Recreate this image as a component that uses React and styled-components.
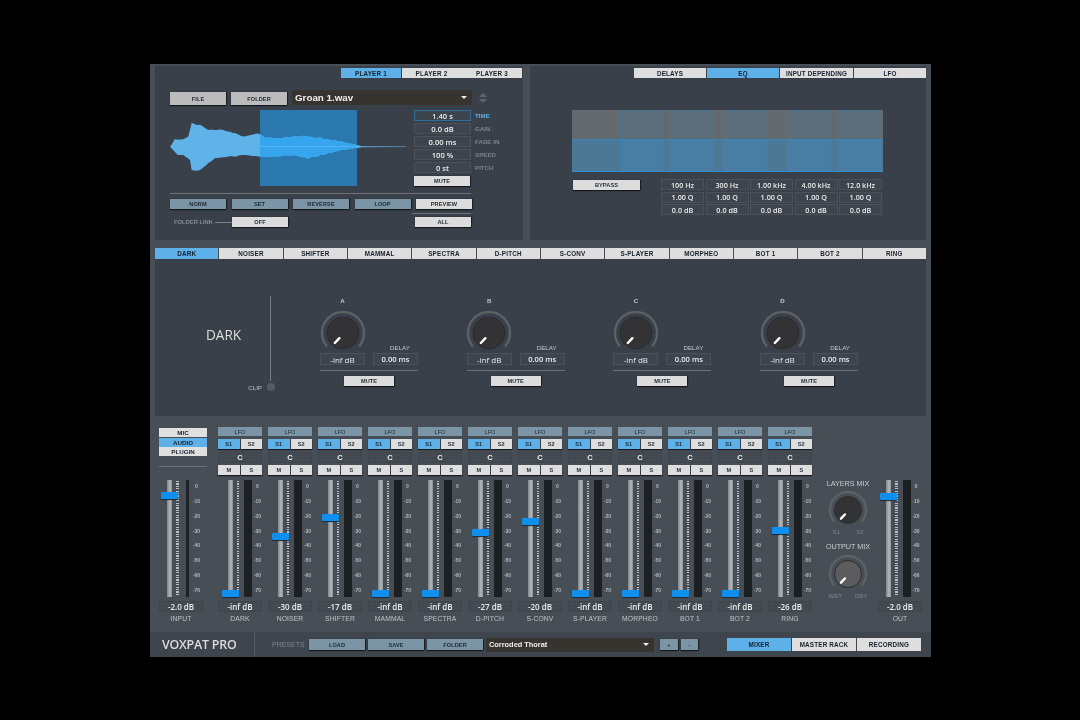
import React from "react";
import styled, { createGlobalStyle } from "styled-components";

const Global = createGlobalStyle`
  html, body { margin: 0; padding: 0; background: #000; }
  #root { padding: 64px 0 0 150px; width: 1080px; height: 720px; box-sizing: border-box; overflow: hidden; background: #000; }
  * { box-sizing: border-box; }
`;

const Shell = styled.div`
  width: 781px; height: 593px; background: #474e56; display: flex; flex-direction: column;
  font-family: "Liberation Sans", Arial, sans-serif; filter: blur(0.45px); color: #e6e6e6;
`;
const TopRow = styled.div`display: flex; gap: 7px; padding: 2px 5px 0; height: 184px; flex: none;`;
const Panel = styled.section`
  width: ${p => p.$w}px; height: 174px; background: #3a4049; display: flex; flex-direction: column;
`;
const TabStrip = styled.div`
  display: flex; justify-content: ${p => p.$end ? "flex-end" : "flex-start"}; height: ${p => p.$h || 10}px;
  margin: ${p => p.$m || "0"}; flex: none; gap: ${p => p.$gap ?? 1}px;
`;
const Tab = styled.div`
  width: ${p => p.$w ? p.$w + "px" : "auto"}; flex: ${p => p.$w ? "none" : 1}; height: 100%;
  background: ${p => p.$on ? "#5eb0e8" : "#dedede"}; color: #15202a;
  font: bold 6.3px "Liberation Sans", Arial, sans-serif; letter-spacing: .2px;
  display: flex; align-items: center; justify-content: center; white-space: nowrap;
`;
const Btn = styled.div`
  width: ${p => p.$w}px; height: ${p => p.$h || 10}px; flex: none; margin: ${p => p.$m || 0};
  background: ${p => p.$tone === "steel" ? "#7b94a6" : p.$tone === "grey" ? "#bcbcbc" : "#dcdcdc"};
  box-shadow: 0 1px 1px #14181c, 1px 0 1px #1d2126;
  color: #1d2a34; font: bold 5.6px "Liberation Sans", Arial, sans-serif;
  display: flex; align-items: center; justify-content: center; letter-spacing: .1px;
`;
const FileRow = styled.div`display: flex; align-items: flex-end; gap: 5px; margin: 12px 0 0 15px; height: 15px;`;
const Select = styled.div`
  width: ${p => p.$w}px; height: ${p => p.$h}px; background: #37332f; color: #f0f0f0; flex: none;
  font: bold ${p => p.$fs}px "Liberation Sans", Arial, sans-serif; display: flex; align-items: center;
  justify-content: space-between; padding: 0 5px 0 3px;
`;
const Caret = styled.i`
  width: 0; height: 0; border-left: 3px solid transparent; border-right: 3px solid transparent;
  border-top: 3.5px solid #f2f2f2; display: block;
`;
const Stepper = styled.div`display: flex; flex-direction: column; gap: 2px; align-self: center; margin-left: 2px;`;
const StepArrow = styled.i`
  width: 0; height: 0; display: block; border-left: 4px solid transparent; border-right: 4px solid transparent;
  ${p => p.$up ? "border-bottom: 4px solid #5d656d;" : "border-top: 4px solid #5d656d;"}
`;
const WaveRow = styled.div`display: flex; margin: 5px 0 0 15px; gap: 8px; height: 76px;`;
const Params = styled.div`display: grid; grid-template-columns: 57px auto; grid-auto-rows: 11px; row-gap: 2px; column-gap: 4px; align-items: center;`;
const ValueBox = styled.div`
  width: ${p => p.$w ? p.$w + "px" : "100%"}; height: ${p => p.$h || 11}px; flex: none; position: relative;
  border: 1px solid ${p => p.$on ? "#2f6f9c" : p.$ghost ? "#3f454d" : "#4b5159"}; background: ${p => p.$ghost ? "#434a52" : "#3e444d"}; color: #ececec;
  font: ${p => p.$fw || 600} ${p => p.$fs || 7.6}px "Open Sans", "Liberation Sans", sans-serif;
  display: flex; align-items: center; justify-content: center; white-space: nowrap;
`;
const ParamLabel = styled.span`
  font: bold 6.2px "Liberation Sans", Arial, sans-serif; color: ${p => p.$on ? "#5eb0e8" : "#7b8289"};
`;
const Rule = styled.div`height: 1px; background: #6d7479; width: ${p => p.$w}px; margin: ${p => p.$m || 0}; flex: none;`;
const BtnRow = styled.div`display: flex; gap: 5.5px; margin: 5px 0 0 15px;`;
const BottomRow = styled.div`display: flex; margin: 4px 0 0 15px; align-items: flex-end; justify-content: space-between; width: 301px;`;
const FolderLink = styled.div`display: flex; align-items: center;`;
const LinkLabel = styled.span`font: bold 5.8px "Liberation Sans", Arial, sans-serif; color: #858c92; margin-left: 4px; width: 41px; white-space: nowrap;`;
const LinkWire = styled.i`width: 17px; height: 1px; background: #7d848b; display: block;`;
const AllCol = styled.div`display: flex; flex-direction: column; align-items: flex-end; gap: 3px;`;

const EqWrap = styled.div`margin: 32px 0 0 42px; width: 311px; height: 62px; flex: none;`;
const EqBottom = styled.div`display: flex; margin: 7px 0 0 43px; align-items: flex-start;`;
const EqTable = styled.div`display: grid; grid-template-columns: repeat(5, 43px); column-gap: 1.5px; row-gap: 1.5px; margin-left: 21px; grid-auto-rows: 11px;`;

const FxTabs = styled.div`display: flex; margin: 0 5px; height: 11px; flex: none; gap: 1px;`;
const FxPanel = styled.section`
  margin: 0 5px; height: 157px; flex: none; background: #3a4049; display: flex; align-items: flex-start; padding-top: 37px;
`;
const Head = styled.div`width: 116px; height: 85px; border-right: 1px solid #767c82; flex: none; position: relative; display: flex; align-items: center; padding: 0 0 8px 51px;`;
const FxTitle = styled.div`font: 500 13.6px "Open Sans", "Liberation Sans", sans-serif; color: #dedede;`;
const ClipTag = styled.div`
  position: absolute; right: -5px; top: 87px; display: flex; align-items: center; gap: 5px;
  font: 6.2px "Liberation Sans", Arial, sans-serif; color: #bcc0c4;
`;
const Led = styled.i`width: 8px; height: 8px; border-radius: 50%; background: #565b60; display: block;`;
const Groups = styled.div`display: flex; gap: 48.7px; margin-left: 49px;`;
const Group = styled.div`width: 98px; display: flex; flex-direction: column; align-items: center;`;
const GroupTop = styled.div`display: flex; width: 98px; justify-content: space-between; align-items: flex-end; height: 69px;`;
const GroupCol = styled.div`display: flex; flex-direction: column; align-items: center; width: 45px;`;
const TinyLabel = styled.div`
  font: ${p => p.$fw || 400} ${p => p.$fs || 6.2}px "Liberation Sans", Arial, sans-serif; color: ${p => p.$c || "#c4c8cc"};
  margin: ${p => p.$m || 0}; line-height: ${p => p.$lh || 8}px; white-space: nowrap; letter-spacing: ${p => p.$ls || 0}px;
`;
const KnobSvg = styled.svg`display: block; margin: ${p => p.$m || 0}; flex: none;`;

const Mixer = styled.section`display: flex; height: 216px; flex: none; padding: 11px 0 0 9px; background: #474e56;`;
const InputCol = styled.div`width: 48px; margin-right: 11px; flex: none;`;
const ChannelCol = styled.div`width: 44px; margin-right: 6px; flex: none;`;
const TopBlock = styled.div`height: 48px; display: flex; flex-direction: column;`;
const Sources = styled.div`display: flex; flex-direction: column; gap: .5px; margin-top: 1px;`;
const SourceBtn = styled.div`
  height: 9px; width: 48px; background: ${p => p.$on ? "#5eb0e8" : "#e0e0e0"}; color: #15202a;
  font: bold 6.2px "Liberation Sans", Arial, sans-serif; display: flex; align-items: center; justify-content: center;
`;
const Pair = styled.div`display: flex; gap: 1px; height: 10px; margin-top: ${p => p.$mt || 0}px;`;
const Small = styled.div`
  flex: 1; background: ${p => p.$on ? "#5eb0e8" : "#dedede"}; color: #1d2a34; box-shadow: 0 1px 1px #181c20;
  font: bold 5.6px "Liberation Sans", Arial, sans-serif; display: flex; align-items: center; justify-content: center;
`;
const LfoBtn = styled.div`
  height: 9px; background: #7b94a6; color: #1d2a34; font: 5.6px "Liberation Sans", Arial, sans-serif;
  display: flex; align-items: center; justify-content: center;
`;
const CenterBox = styled.div`
  height: 11px; margin-top: 3px; background: #434a52; border: 1px solid #3f454d; color: #eee;
  font: bold 7.6px "Liberation Sans", Arial, sans-serif; display: flex; align-items: center; justify-content: center;
`;
const Strip = styled.div`height: 117px; margin-top: 5px; display: flex; padding-left: ${p => p.$pad}px; position: relative;`;
const Track = styled.div`
  width: 5px; height: 117px; position: relative; flex: none;
  background: linear-gradient(90deg, #80868a, #b4b8ba 60%, #8a9094);
`;
const Thumb = styled.div`
  position: absolute; left: -6px; width: 17px; height: 7px; top: ${p => p.$top}px; background: #0f8fee;
  box-shadow: 0 1px 1px #1a2a38; border-radius: 1px;
`;
const Dots = styled.div`
  width: 2.5px; height: 115px; flex: none; margin: 1px 0 0 ${p => p.$ml}px;
  background: repeating-linear-gradient(180deg, #bcc1c5 0, #bcc1c5 1.2px, transparent 1.2px, transparent 2.4px);
`;
const Meter = styled.div`
  width: ${p => p.$w}px; height: 117px; flex: none; margin-left: ${p => p.$ml}px; background: #202326;
  ${p => p.$split ? "background: linear-gradient(90deg, #1d2023 45%, #33383d 45%, #33383d 55%, #1d2023 55%);" : ""}
`;
const Scale = styled.div`
  height: 109px; margin: 4px 0 0 ${p => p.$ml}px; display: flex; flex-direction: column; justify-content: space-between;
  font: bold 5px "Liberation Sans", Arial, sans-serif; color: #b4b9bd; width: 10px; flex: none;
`;
const ScaleTick = styled.span`display: block; line-height: 5px; height: 5px; text-align: center;`;
const ValueGap = styled.div`margin-top: 4px;`;
const ChanLabel = styled.div`
  font: 6.8px "Liberation Sans", Arial, sans-serif; color: #bfc4c8; text-align: center; margin-top: 3px; line-height: 8px; letter-spacing: .1px;
  width: 44px;
`;
const MixCol = styled.div`width: 60px; padding-top: 53px; flex: none; display: flex; flex-direction: column; align-items: center;`;
const KnobLegend = styled.div`
  display: flex; justify-content: space-between; width: ${p => p.$w}px; height: 6px; margin-top: -1px;
  font: 6px "Liberation Sans", Arial, sans-serif; color: #7f868c; line-height: 6px;
`;

const Footer = styled.footer`display: flex; align-items: center; height: 25px; flex: none; background: #3e454d;`;
const Brand = styled.div`
  width: 105px; height: 100%; border-right: 1px solid #565c63; padding-left: 12px; flex: none; display: flex; align-items: center;
  font: 600 12.4px "Open Sans", "Liberation Sans", sans-serif; color: #dcdcdc; letter-spacing: -.2px;
`;
const PresetLabel = styled.span`font: 7px "Liberation Sans", Arial, sans-serif; color: #81888e; margin: 0 6px 0 17px; width: 31px;`;
const FootGroup = styled.div`display: flex; align-items: center; gap: 3px;`;
const ModeTabs = styled.div`display: flex; gap: 1px; margin-left: 29px; height: 13px;`;

/* ---------- data ---------- */
const top = [[15,140],[30,118],[55,118],[70,110],[80,70],[105,75],[130,90],[165,88],[190,95],[210,100],[235,110],[280,100],[300,112],[340,115],[380,110],[420,108],[470,115],[530,125],[590,138]];
const bot = [[590,142],[530,150],[470,165],[430,175],[380,165],[330,170],[285,170],[240,165],[190,170],[150,175],[130,190],[105,210],[80,212],[75,180],[55,165],[30,165]];
function wavePath() {
  const pts = [];
  const add = (arr, sign) => {
    for (let i = 0; i < arr.length - 1; i++) {
      const [x0, y0] = arr[i], [x1, y1] = arr[i + 1];
      const n = Math.max(1, Math.round(Math.abs(x1 - x0) / 8));
      for (let k = 0; k < n; k++) {
        const t = k / n, x = x0 + (x1 - x0) * t;
        const jit = Math.sin(x * 1.37 + sign) * 0.9 + Math.sin(x * 0.53) * 1.1;
        const scale = x > 540 ? 0.2 : 1;
        pts.push([x / 3 - 5, (y0 + (y1 - y0) * t + jit * scale) / 3 - 10]);
      }
    }
  };
  add(top, 1);
  pts.push([191.7, 36.2], [236, 36.4], [236, 37], [191.7, 37.2]);
  add(bot, 2);
  pts.push([0, 36.7]);
  return "M" + pts.map(p => p[0].toFixed(1) + " " + p[1].toFixed(1)).join("L") + "Z";
}
const WAVE = wavePath();

function Wave() {
  return (
    <svg width="236" height="76" viewBox="0 0 236 76" style={{ display: "block", flex: "none" }}>
      <defs>
        <clipPath id="sel"><rect x="90" y="0" width="97" height="76" /></clipPath>
      </defs>
      <rect x="90" y="0" width="97" height="76" fill="#2a78ad" />
      <path d={WAVE} fill="#5fb3e8" />
      <path d={WAVE} fill="#35a6ee" clipPath="url(#sel)" />
      <rect x="90" y="36" width="97" height="1" fill="#6cc0f2" opacity=".6" />
    </svg>
  );
}

const bands = [[48, 44], [97, 45], [151, 45], [215, 45], [265, 45]];
function EqDisplay() {
  return (
    <svg width="311" height="62" viewBox="0 0 311 62" style={{ display: "block" }}>
      <rect width="311" height="30" fill="#626a70" />
      <rect y="30" width="311" height="32" fill="#4c7795" />
      {bands.map(([x, w]) => (
        <g key={x}>
          <rect x={x} width={w} height="30" fill="#5c6d7a" />
          <rect x={x} y="30" width={w} height="32" fill="#4a7da4" />
          <rect x={x + .5} y=".5" width={w - 1} height="61" fill="none" stroke="#2f82bb" strokeOpacity=".35" />
        </g>
      ))}
      <line x1="0" x2="311" y1="30" y2="30" stroke="#2f8fd0" />
      <line x1="0" x2="311" y1="61.5" y2="61.5" stroke="#2f8fd0" />
    </svg>
  );
}

function Knob({ r = 22, inner = 16, fill = "#333336", m }) {
  const s = r * 2 + 2, c = s / 2, ro = r - 1;
  const a = (d) => [c + ro * Math.sin(d * Math.PI / 180), c - ro * Math.cos(d * Math.PI / 180)];
  const [x0, y0] = a(-130), [x1, y1] = a(130);
  const k = r / 22;
  return (
    <KnobSvg $m={m} width={s} height={s} viewBox={`0 0 ${s} ${s}`}>
      <path d={`M${x0} ${y0}A${ro} ${ro} 0 1 1 ${x1} ${y1}`} fill="none" stroke="#5c6166" strokeWidth="2.4" />
      <circle cx={c} cy={c} r={inner} fill={fill} stroke="#2b2c2f" strokeWidth="1" />
      <line x1={c - 8.2 * k} y1={c + 10 * k} x2={c - 3.6 * k} y2={c + 5.2 * k} stroke="#fff" strokeWidth="2.4" strokeLinecap="round" />
    </KnobSvg>
  );
}

const ticks = ["0", "-10", "-20", "-30", "-40", "-50", "-60", "-70"];
function FaderStrip({ y, pad, dotMl, meterW, meterMl, scaleMl, split }) {
  return (
    <Strip $pad={pad}>
      <Track><Thumb $top={y - 3.5 - 480} /></Track>
      <Dots $ml={dotMl} />
      <Meter $w={meterW} $ml={meterMl} $split={split} />
      <Scale $ml={scaleMl}>{ticks.map(t => <ScaleTick key={t}>{t}</ScaleTick>)}</Scale>
    </Strip>
  );
}
const chanStrip = { pad: 9.5, dotMl: 4, meterW: 8, meterMl: 5, scaleMl: 0.5, split: true };

const channels = [
  ["DARK", "-inf dB", 593], ["NOISER", "-30 dB", 536], ["SHIFTER", "-17 dB", 517], ["MAMMAL", "-inf dB", 593],
  ["SPECTRA", "-inf dB", 593], ["D-PITCH", "-27 dB", 532], ["S-CONV", "-20 dB", 521], ["S-PLAYER", "-inf dB", 593],
  ["MORPHEO", "-inf dB", 593], ["BOT 1", "-inf dB", 593], ["BOT 2", "-inf dB", 593], ["RING", "-26 dB", 530],
];
const fxTabs = ["DARK", "NOISER", "SHIFTER", "MAMMAL", "SPECTRA", "D-PITCH", "S-CONV", "S-PLAYER", "MORPHEO", "BOT 1", "BOT 2", "RING"];
const eqRows = [
  ["100 Hz", "300 Hz", "1.00 kHz", "4.00 kHz", "12.0 kHz"],
  ["1.00 Q", "1.00 Q", "1.00 Q", "1.00 Q", "1.00 Q"],
  ["0.0 dB", "0.0 dB", "0.0 dB", "0.0 dB", "0.0 dB"],
];
const params = [["1.40 s", "TIME", true], ["0.0 dB", "GAIN"], ["0.00 ms", "FADE IN"], ["100 %", "SPEED"], ["0 st", "PITCH"]];

export default function App() {
  return (
    <Shell>
      <Global />
      <TopRow>
        <Panel $w={368}>
          <TabStrip $end $m="2px 1px 0 0" $gap={0.5}>
            <Tab $w={60} $on>PLAYER 1</Tab><Tab $w={60}>PLAYER 2</Tab><Tab $w={60}>PLAYER 3</Tab>
          </TabStrip>
          <FileRow>
            <Btn $w={56} $h={13} $tone="grey">FILE</Btn>
            <Btn $w={56} $h={13} $tone="grey">FOLDER</Btn>
            <Select $w={180} $h={15} $fs={9.8}>Groan 1.wav<Caret /></Select>
            <Stepper><StepArrow $up /><StepArrow /></Stepper>
          </FileRow>
          <WaveRow>
            <Wave />
            <Params>
              {params.map(([v, l, on]) => (
                <React.Fragment key={l}>
                  <ValueBox $on={on}>{v}</ValueBox>
                  <ParamLabel $on={on}>{l}</ParamLabel>
                </React.Fragment>
              ))}
              <Btn $w={56}>MUTE</Btn>
            </Params>
          </WaveRow>
          <Rule $w={301} $m="7px 0 0 15px" />
          <BtnRow>
            <Btn $w={56} $tone="steel">NORM</Btn>
            <Btn $w={56} $tone="steel">SET</Btn>
            <Btn $w={56} $tone="steel">REVERSE</Btn>
            <Btn $w={56} $tone="steel">LOOP</Btn>
            <Btn $w={56}>PREVIEW</Btn>
          </BtnRow>
          <BottomRow>
            <FolderLink>
              <LinkLabel>FOLDER LINK</LinkLabel><LinkWire />
              <Btn $w={56}>OFF</Btn>
            </FolderLink>
            <AllCol>
              <Rule $w={59} />
              <Btn $w={56}>ALL</Btn>
            </AllCol>
          </BottomRow>
        </Panel>
        <Panel $w={396}>
          <TabStrip $end $m="2px 0 0 0" $gap={1}>
            <Tab $w={72}>DELAYS</Tab><Tab $w={72} $on>EQ</Tab><Tab $w={73}>INPUT DEPENDING</Tab><Tab $w={72}>LFO</Tab>
          </TabStrip>
          <EqWrap><EqDisplay /></EqWrap>
          <EqBottom>
            <Btn $w={67} $m="1px 0 0 0">BYPASS</Btn>
            <EqTable>
              {eqRows.flat().map((v, i) => <ValueBox key={i} $fs={7.2}>{v}</ValueBox>)}
            </EqTable>
          </EqBottom>
        </Panel>
      </TopRow>
      <FxTabs>
        {fxTabs.map((t, i) => <Tab key={t} $on={i === 0}>{t}</Tab>)}
      </FxTabs>
      <FxPanel>
        <Head>
          <FxTitle>DARK</FxTitle>
          <ClipTag>CLIP<Led /></ClipTag>
        </Head>
        <Groups>
          {["A", "B", "C", "D"].map(l => (
            <Group key={l}>
              <GroupTop>
                <GroupCol>
                  <TinyLabel $fw="bold" $m="0 0 5px">{l}</TinyLabel>
                  <Knob m="0 0 -3px" />
                  <ValueBox $w={45} $h={12} $fw={500} $fs={8}>-inf dB</ValueBox>
                </GroupCol>
                <GroupCol>
                  <TinyLabel $m="0 0 1px 9px">DELAY</TinyLabel>
                  <ValueBox $w={45} $h={12}>0.00 ms</ValueBox>
                </GroupCol>
              </GroupTop>
              <Rule $w={98} $m="5px 0 5px" />
              <Btn $w={50} $h={9.5}>MUTE</Btn>
            </Group>
          ))}
        </Groups>
      </FxPanel>
      <Mixer>
        <InputCol>
          <TopBlock>
            <Sources>
              <SourceBtn>MIC</SourceBtn><SourceBtn $on>AUDIO</SourceBtn><SourceBtn>PLUGIN</SourceBtn>
            </Sources>
            <Rule $w={48} $m="10px 0 0" />
          </TopBlock>
          <FaderStrip y={495} pad={8} dotMl={4} meterW={3} meterMl={7.5} scaleMl={2.5} />
          <ValueGap><ValueBox $ghost $w={44} $fs={8}>-2.0 dB</ValueBox></ValueGap>
          <ChanLabel>INPUT</ChanLabel>
        </InputCol>
        {channels.map(([name, val, y]) => (
          <ChannelCol key={name}>
            <TopBlock>
              <LfoBtn>LFO</LfoBtn>
              <Pair $mt={3}><Small $on>S1</Small><Small>S2</Small></Pair>
              <CenterBox>C</CenterBox>
              <Pair $mt={2}><Small>M</Small><Small>S</Small></Pair>
            </TopBlock>
            <FaderStrip y={y} {...chanStrip} />
            <ValueGap><ValueBox $ghost $fs={8}>{val}</ValueBox></ValueGap>
            <ChanLabel>{name}</ChanLabel>
          </ChannelCol>
        ))}
        <MixCol>
          <TinyLabel $fs={7.2} $c="#c8ccd0">LAYERS MIX</TinyLabel>
          <Knob r={19} inner={13.5} m="2px 0 0" />
          <KnobLegend $w={31}><span>S1</span><span>S2</span></KnobLegend>
          <TinyLabel $fs={7.2} $c="#c8ccd0" $m="8px 0 0">OUTPUT MIX</TinyLabel>
          <Knob r={19} inner={13.5} fill="#5c5b5d" m="3px 0 0" />
          <KnobLegend $w={39}><span>WET</span><span>DRY</span></KnobLegend>
        </MixCol>
        <ChannelCol>
          <TopBlock />
          <FaderStrip y={496} {...chanStrip} pad={8} />
          <ValueGap><ValueBox $ghost $fs={8}>-2.0 dB</ValueBox></ValueGap>
          <ChanLabel>OUT</ChanLabel>
        </ChannelCol>
      </Mixer>
      <Footer>
        <Brand>VOXPAT PRO</Brand>
        <PresetLabel>PRESETS</PresetLabel>
        <FootGroup>
          <Btn $w={56} $h={11} $tone="steel">LOAD</Btn>
          <Btn $w={56} $h={11} $tone="steel">SAVE</Btn>
          <Btn $w={56} $h={11} $tone="steel">FOLDER</Btn>
          <Select $w={168} $h={14} $fs={7.4}>Corroded Thorat<Caret /></Select>
        </FootGroup>
        <FootGroup>
          <Btn $w={18} $h={11} $tone="steel" $m="0 0 0 6px">+</Btn>
          <Btn $w={17} $h={11} $tone="steel">-</Btn>
        </FootGroup>
        <ModeTabs>
          <Tab $w={64} $on>MIXER</Tab><Tab $w={64}>MASTER RACK</Tab><Tab $w={64}>RECORDING</Tab>
        </ModeTabs>
      </Footer>
    </Shell>
  );
}
